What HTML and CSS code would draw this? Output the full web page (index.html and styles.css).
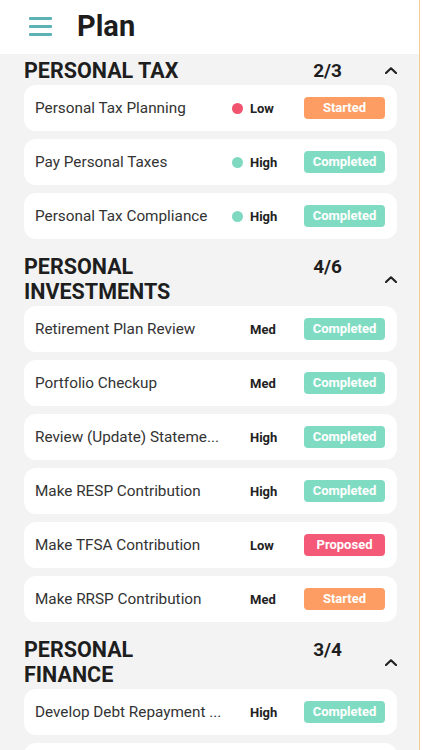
FILE: index.html
```html
<!DOCTYPE html>
<html lang="en">
<head>
    <meta charset="UTF-8">
    <meta name="viewport" content="width=device-width, initial-scale=1.0">
    <title>Plan</title>
    <link rel="stylesheet" href="styles.css">
</head>
<body>

<div class="app">
    <header class="app-header">
        <div class="menu-btn">
            <span></span>
            <span></span>
            <span></span>
        </div>
        <h1>Plan</h1>
    </header>

    <main class="content">
        <section class="section">
            <div class="section-head">
                <h2>PERSONAL TAX</h2>
                <span class="count">2/3</span>
                <svg class="chevron" viewBox="0 0 12 7" width="12" height="7"><polyline points="1,6 6,1.3 11,6"/></svg>
            </div>
            <ul class="tasks">
                <li class="task">
                    <span class="task-name">Personal Tax Planning</span>
                    <span class="priority"><i class="dot dot-low"></i>Low</span>
                    <span class="badge started">Started</span>
                </li>
                <li class="task">
                    <span class="task-name">Pay Personal Taxes</span>
                    <span class="priority"><i class="dot dot-high"></i>High</span>
                    <span class="badge completed">Completed</span>
                </li>
                <li class="task">
                    <span class="task-name">Personal Tax Compliance</span>
                    <span class="priority"><i class="dot dot-high"></i>High</span>
                    <span class="badge completed">Completed</span>
                </li>
            </ul>
        </section>

        <section class="section">
            <div class="section-head">
                <h2>PERSONAL INVESTMENTS</h2>
                <span class="count">4/6</span>
                <svg class="chevron" viewBox="0 0 12 7" width="12" height="7"><polyline points="1,6 6,1.3 11,6"/></svg>
            </div>
            <ul class="tasks">
                <li class="task">
                    <span class="task-name">Retirement Plan Review</span>
                    <span class="priority"><i class="dot"></i>Med</span>
                    <span class="badge completed">Completed</span>
                </li>
                <li class="task">
                    <span class="task-name">Portfolio Checkup</span>
                    <span class="priority"><i class="dot"></i>Med</span>
                    <span class="badge completed">Completed</span>
                </li>
                <li class="task">
                    <span class="task-name">Review (Update) Stateme...</span>
                    <span class="priority"><i class="dot"></i>High</span>
                    <span class="badge completed">Completed</span>
                </li>
                <li class="task">
                    <span class="task-name">Make RESP Contribution</span>
                    <span class="priority"><i class="dot"></i>High</span>
                    <span class="badge completed">Completed</span>
                </li>
                <li class="task">
                    <span class="task-name">Make TFSA Contribution</span>
                    <span class="priority"><i class="dot"></i>Low</span>
                    <span class="badge proposed">Proposed</span>
                </li>
                <li class="task">
                    <span class="task-name">Make RRSP Contribution</span>
                    <span class="priority"><i class="dot"></i>Med</span>
                    <span class="badge started">Started</span>
                </li>
            </ul>
        </section>

        <section class="section">
            <div class="section-head">
                <h2>PERSONAL FINANCE</h2>
                <span class="count">3/4</span>
                <svg class="chevron" viewBox="0 0 12 7" width="12" height="7"><polyline points="1,6 6,1.3 11,6"/></svg>
            </div>
            <ul class="tasks">
                <li class="task">
                    <span class="task-name">Develop Debt Repayment ...</span>
                    <span class="priority"><i class="dot"></i>High</span>
                    <span class="badge completed">Completed</span>
                </li>
                <!-- next card is only peeking in below the fold -->
                <li class="task"></li>
            </ul>
        </section>
    </main>
</div>

</body>
</html>
```

FILE: styles.css
```css
body {
    margin: 0;
    background-color: #fff;
    font-family: Roboto, "Liberation Sans", sans-serif;
    color: #333;
}
.app {
    width: 419px;
    height: 750px;
    overflow: hidden;
    background-color: #f3f3f3;
    border-right: 1px solid #f3cc95;
}
.app-header {
    display: flex;
    align-items: center;
    height: 54px;
    padding: 0 0 2px 29px;
    box-sizing: border-box;
    background-color: #fff;
}
.menu-btn {
    display: flex;
    flex-direction: column;
    gap: 5px;
    width: 23px;
}
.menu-btn span {
    display: block;
    height: 3px;
    border-radius: 1px;
    background-color: #5cb2b6;
}
.app-header h1 {
    margin: 0 0 0 25px;
    font-size: 29px;
    font-weight: 700;
    color: #1d1d1d;
}
.content {
    padding: 4px 22px 0 24px;
}
.section + .section {
    margin-top: 15px;
}
.section-head {
    display: grid;
    grid-template-columns: 185px 1fr 12px;
    align-items: center;
    margin-bottom: 2px;
}
.section-head h2 {
    margin: 0;
    font-size: 21.5px;
    line-height: 25px;
    font-weight: 700;
    color: #1e1e1e;
}
.count {
    align-self: start;
    justify-self: end;
    margin-right: 43px;
    font-size: 19px;
    line-height: 25px;
    font-weight: 700;
    color: #1e1e1e;
}
.chevron {
    fill: none;
    stroke: #222;
    stroke-width: 2.2;
    stroke-linecap: round;
    stroke-linejoin: round;
}
.tasks {
    list-style-type: none;
    margin: 0;
    padding: 0;
}
.task {
    display: flex;
    align-items: center;
    height: 46px;
    margin-bottom: 8px;
    padding: 0 12px 0 11px;
    background-color: #fff;
    border-radius: 12px;
}
.task-name {
    flex: 1;
    min-width: 0;
    white-space: nowrap;
    overflow: hidden;
    font-size: 15.3px;
    color: #333;
}
.priority {
    display: flex;
    align-items: center;
    width: 72px;
    font-size: 13px;
    font-weight: 700;
    color: #222;
}
.dot {
    width: 11px;
    height: 11px;
    margin-right: 7px;
    border-radius: 50%;
}
.dot-low {
    background-color: #f2536f;
}
.dot-high {
    background-color: #7fd9c1;
}
.badge {
    width: 81px;
    height: 22px;
    line-height: 22px;
    border-radius: 4px;
    text-align: center;
    font-size: 13px;
    font-weight: 700;
    color: #fff;
}
.started {
    background-color: #fd9d63;
}
.completed {
    background-color: #7fdcc2;
}
.proposed {
    background-color: #f45a78;
}
```
